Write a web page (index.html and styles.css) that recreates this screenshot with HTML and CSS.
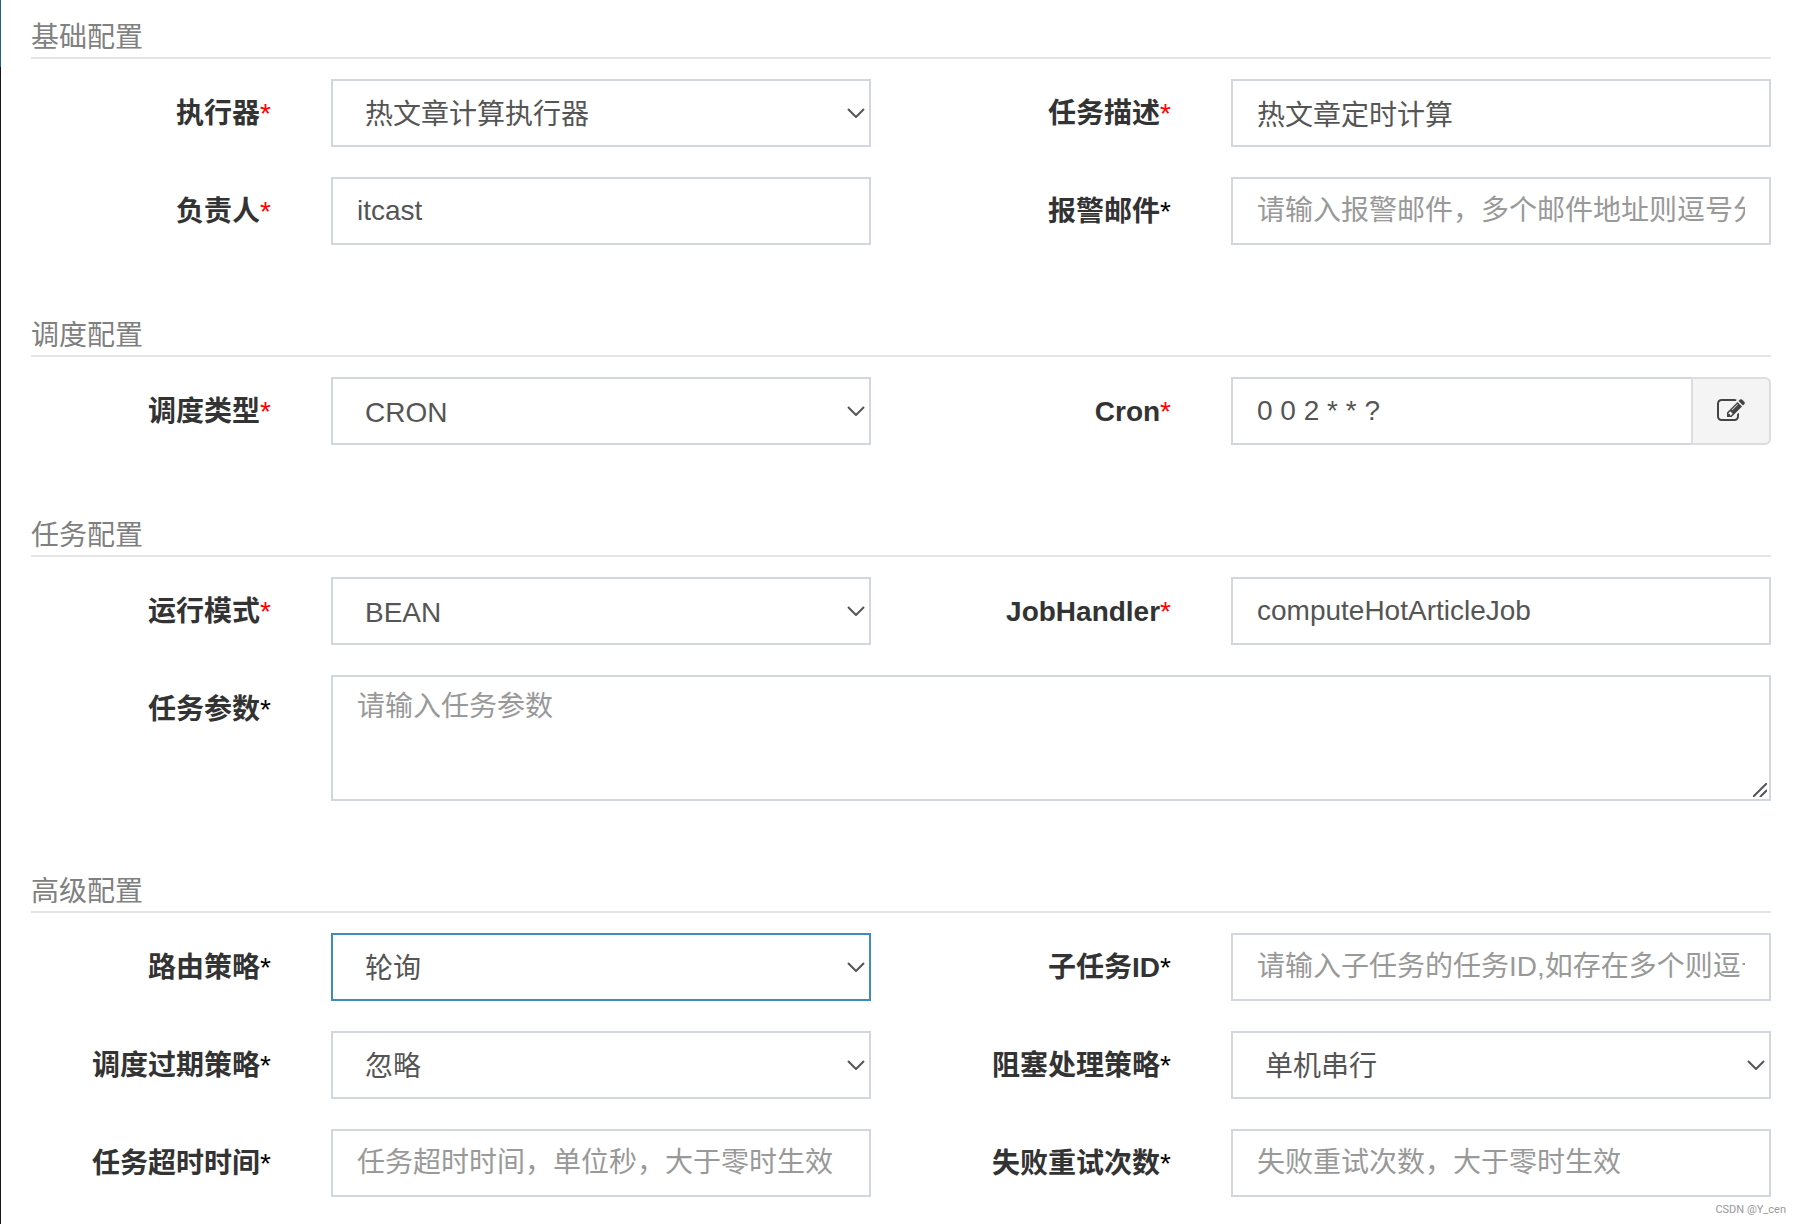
FILE: index.html
```html
<!DOCTYPE html>
<html lang="zh-CN">
<head>
<meta charset="utf-8">
<meta name="viewport" content="width=device-width, initial-scale=1">
<title>任务配置</title>
<link rel="stylesheet" href="styles.css">
</head>
<body>
<svg class="symbols" aria-hidden="true">
  <symbol id="chevron" viewBox="0 0 18 10"><path d="M1 1l8 8 8-8" fill="none" stroke="currentColor" stroke-width="2"/></symbol>
</svg>
<form class="job-form">
  <section class="section">
    <h2 class="section-title">基础配置</h2>
    <div class="fields">
      <label class="label" for="executor">执行器<span class="star required">*</span></label>
      <div class="select-box">
        <select class="control select" id="executor"><option>热文章计算执行器</option></select>
        <svg class="chevron" aria-hidden="true"><use href="#chevron"/></svg>
      </div>
      <label class="label" for="desc">任务描述<span class="star required">*</span></label>
      <input class="control" id="desc" type="text" value="热文章定时计算">
      <label class="label" for="author">负责人<span class="star required">*</span></label>
      <input class="control" id="author" type="text" value="itcast">
      <label class="label" for="email">报警邮件<span class="star">*</span></label>
      <input class="control" id="email" type="text" placeholder="请输入报警邮件，多个邮件地址则逗号分隔">
    </div>
  </section>

  <section class="section">
    <h2 class="section-title">调度配置</h2>
    <div class="fields">
      <label class="label" for="schedule">调度类型<span class="star required">*</span></label>
      <div class="select-box">
        <select class="control select" id="schedule"><option>CRON</option></select>
        <svg class="chevron" aria-hidden="true"><use href="#chevron"/></svg>
      </div>
      <label class="label" for="cron">Cron<span class="star required">*</span></label>
      <div class="input-group">
        <input class="control" id="cron" type="text" value="0 0 2 * * ?">
        <button class="addon" type="button" aria-label="编辑">
          <svg class="edit-icon" viewBox="0 0 1792 1792" aria-hidden="true"><path fill="currentColor" d="M888 1184l116-116-152-152-116 116v56h96v96h56zm440-720q-16-16-33 1l-350 350q-17 17-1 33t33-1l350-350q17-17 1-33zm80 594v190q0 119-84.500 203.500t-203.500 84.500h-832q-119 0-203.500-84.500t-84.500-203.500v-832q0-119 84.500-203.500t203.500-84.500h832q63 0 117 25 15 7 18 23 3 17-9 29l-49 49q-14 14-32 8-23-6-45-6h-832q-66 0-113 47t-47 113v832q0 66 47 113t113 47h832q66 0 113-47t47-113v-126q0-13 9-22l64-64q15-15 35-7t20 29zm-96-738l288 288-672 672h-288v-288zm444 132l-92 92-288-288 92-92q28-28 68-28t68 28l152 152q28 28 28 68t-28 68z"/></svg>
        </button>
      </div>
    </div>
  </section>

  <section class="section">
    <h2 class="section-title">任务配置</h2>
    <div class="fields">
      <label class="label" for="mode">运行模式<span class="star required">*</span></label>
      <div class="select-box">
        <select class="control select" id="mode"><option>BEAN</option></select>
        <svg class="chevron" aria-hidden="true"><use href="#chevron"/></svg>
      </div>
      <label class="label" for="handler">JobHandler<span class="star required">*</span></label>
      <input class="control" id="handler" type="text" value="computeHotArticleJob">
      <label class="label" for="param">任务参数<span class="star">*</span></label>
      <div class="textarea-box">
        <textarea class="control textarea" id="param" placeholder="请输入任务参数"></textarea>
        <svg class="grip" viewBox="0 0 14 14" aria-hidden="true"><path d="M0 14L14 0M7 14l7-7" fill="none" stroke="currentColor" stroke-width="2"/></svg>
      </div>
    </div>
  </section>

  <section class="section">
    <h2 class="section-title">高级配置</h2>
    <div class="fields">
      <label class="label" for="route">路由策略<span class="star">*</span></label>
      <div class="select-box">
        <select class="control select active" id="route"><option>轮询</option></select>
        <svg class="chevron" aria-hidden="true"><use href="#chevron"/></svg>
      </div>
      <label class="label" for="child">子任务ID<span class="star">*</span></label>
      <input class="control" id="child" type="text" placeholder="请输入子任务的任务ID,如存在多个则逗号分隔">
      <label class="label" for="misfire">调度过期策略<span class="star">*</span></label>
      <div class="select-box">
        <select class="control select" id="misfire"><option>忽略</option></select>
        <svg class="chevron" aria-hidden="true"><use href="#chevron"/></svg>
      </div>
      <label class="label" for="block">阻塞处理策略<span class="star">*</span></label>
      <div class="select-box">
        <select class="control select" id="block"><option>单机串行</option></select>
        <svg class="chevron" aria-hidden="true"><use href="#chevron"/></svg>
      </div>
      <label class="label" for="timeout">任务超时时间<span class="star">*</span></label>
      <input class="control" id="timeout" type="text" placeholder="任务超时时间，单位秒，大于零时生效">
      <label class="label" for="retry">失败重试次数<span class="star">*</span></label>
      <input class="control" id="retry" type="text" placeholder="失败重试次数，大于零时生效">
    </div>
  </section>
</form>
<footer class="credit">CSDN @Y_cen</footer>
</body>
</html>
```
FILE: styles.css
```css
* { box-sizing: border-box; }

body {
  margin: 0;
  min-height: 100vh;
  background: linear-gradient(#265f82 67px, #11171a 67px) left top / 1px 100% no-repeat #fff;
  color: #333;
  font: 28px/40px "Liberation Sans", "Noto Sans CJK SC", sans-serif;
}

.symbols { display: none; }

.job-form {
  display: flex;
  flex-direction: column;
  gap: 70px;
  padding: 17px 30px 0 31px;
}

.section-title {
  margin: 0 0 20px;
  padding-top: 2px;
  border-bottom: 2px solid #e5e5e5;
  color: #808080;
  font-size: 28px;
  font-weight: 400;
  line-height: 38px;
}

.fields {
  display: grid;
  grid-template-columns: minmax(0, 4fr) minmax(0, 9fr) minmax(0, 4fr) minmax(0, 9fr);
  gap: 30px 60px;
}

.label {
  padding-top: 15px;
  font-weight: 700;
  line-height: 40px;
  text-align: right;
  white-space: nowrap;
}

.star { color: #000; font-weight: 400; }
.required { color: #f00; }

.control {
  display: block;
  width: 100%;
  height: 68px;
  margin: 0;
  padding: 12px 24px;
  border: 2px solid #d2d6de;
  border-radius: 0;
  outline: 0;
  background: #fff;
  color: #555;
  font: inherit;
  line-height: 40px;
}

.control::placeholder { color: #999; opacity: 1; }
.control:focus, .active { border-color: #3c8dbc; }

.select-box { position: relative; }

.select {
  padding: 14px 24px 10px 32px;
  appearance: none;
}

.chevron {
  position: absolute;
  top: 29px;
  right: 6px;
  width: 18px;
  height: 10px;
  color: #555;
  pointer-events: none;
}

.input-group { display: flex; }
.input-group .control { flex: 1; min-width: 0; border-right: 0; }

.addon {
  display: flex;
  align-items: center;
  justify-content: center;
  width: 80px;
  margin: 0;
  padding: 0;
  border: 2px solid #ddd;
  border-radius: 0 6px 6px 0;
  background: #f4f4f4;
  color: #444;
}

.edit-icon { width: 28px; height: 28px; }

.textarea-box { position: relative; grid-column: span 3; }
.textarea { height: 126px; padding: 10px 24px; resize: vertical; }
.textarea::-webkit-resizer { display: none; }

.grip {
  position: absolute;
  right: 4px;
  bottom: 4px;
  width: 14px;
  height: 14px;
  color: #555;
  pointer-events: none;
}

.credit {
  padding: 7px 15px 0 0;
  color: #999;
  font: 11px/12px Roboto, sans-serif;
  text-align: right;
}
```
